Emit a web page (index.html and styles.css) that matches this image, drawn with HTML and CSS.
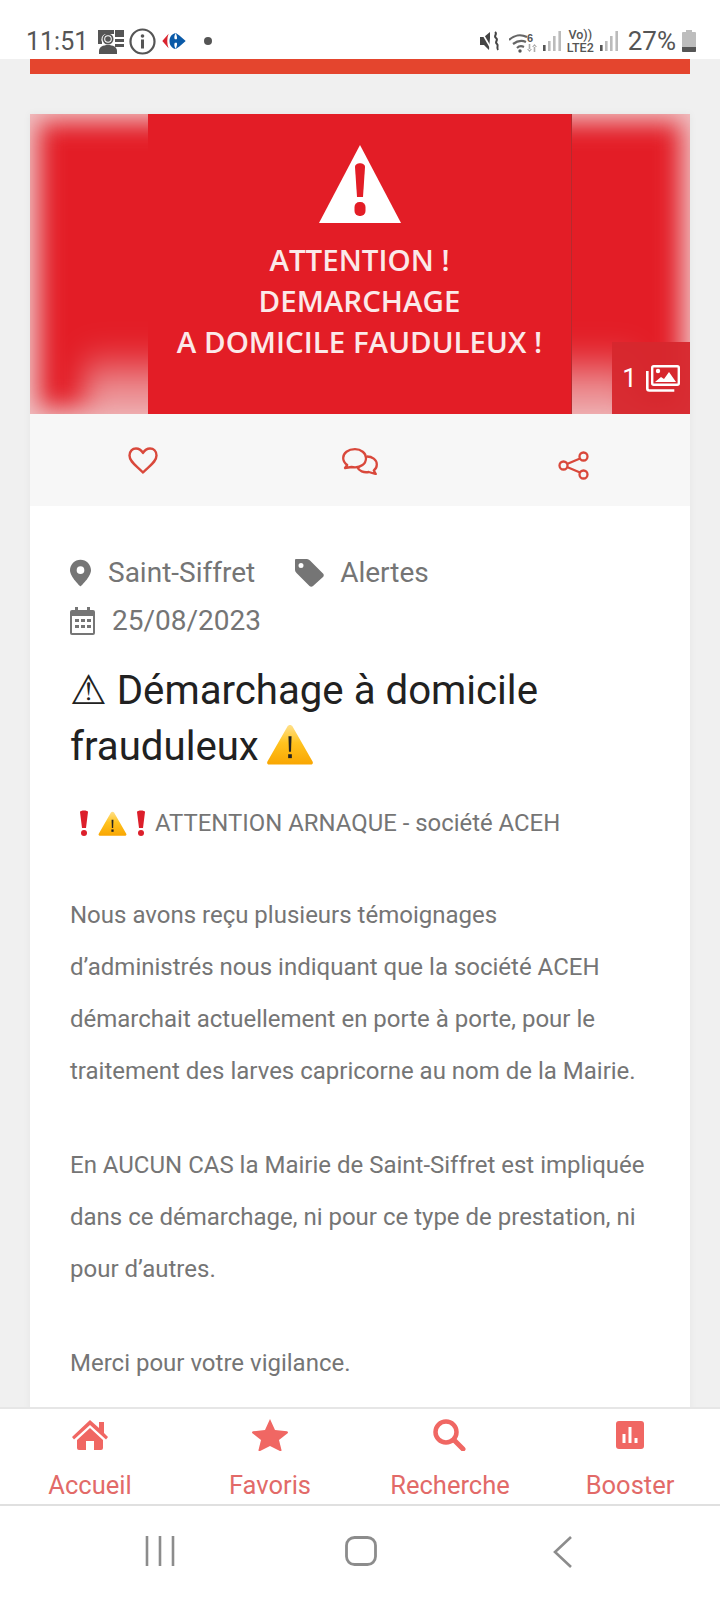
FILE: index.html
```html
<!DOCTYPE html>
<html lang="fr">
<head>
<meta charset="utf-8">
<title>Démarchage à domicile frauduleux</title>
<link rel="stylesheet" href="styles.css">
</head>
<body>
<div class="screen">
  <header class="status">
    <div class="status-left">
      <span class="time">11:51</span>
      <svg class="ic-news" viewBox="0 0 27 25"><path class="d" d="M1 1h16v4H8a6 6 0 0 0-3 8v2H1zM18 1h9v7h-9zM18 10h9v3h-9zM18 15h9v3h-9z"/><circle class="d" cx="11" cy="10" r="5.500"/><circle class="w" cx="11" cy="10" r="3.800"/><circle class="d" cx="11" cy="10" r="2.800"/><path class="d" d="M2 25v-3c0-4 4-6 9-6s9 2 9 6v3z"/></svg>
      <svg class="ic-info" viewBox="0 0 27 27"><circle cx="13.500" cy="13.500" r="12" fill="none" stroke="#555" stroke-width="2.200"/><circle class="d" cx="13.500" cy="8" r="1.800"/><rect class="d" x="12" y="11.500" width="3" height="9"/></svg>
      <svg class="ic-carrefour" viewBox="0 0 28 20"><path d="M8 2 1 10l7 8c-2-5-2-11 0-16z" fill="#d9232e"/><path d="M16 1c-5 1-7 5-7 9s2 8 7 9c-2-3-2-6-1-7h2c1 1 0 4-1 7l4-3 7-6-7-6-4-3c1 3 2 6 1 7h-2c-1-1-1-4 1-7z" fill="#0a5aa8"/></svg>
      <span class="dot"></span>
    </div>
    <div class="status-right">
      <svg class="ic-mute" viewBox="0 0 20 20"><path fill="#444" d="M0 6h4l6-5v6l-1 12-5-5H0z"/><path d="M1 0l11 19" stroke="#fff" stroke-width="1.600"/><path d="M15 1c3 2-2 4 1 6 3 2-2 4 1 6 2 2-1 3 1 6" fill="none" stroke="#444" stroke-width="2"/></svg>
      <svg class="ic-wifi" viewBox="0 -3 28 23"><g fill="none" stroke="#666" stroke-width="2.200"><path d="M0 7c5-5 12-6 18-3"/><path d="M4 11c4-3 9-4 13-2"/><path d="M8 15c2-2 5-2 7-1"/></g><circle cx="11" cy="18" r="1.700" fill="#555"/><path d="M18 16l2.500 3 2.500-3zM19.700 11h1.600v6h-1.600z" fill="#aaa"/><path d="M25.500 11l-2.500 3h5zM24.700 13h1.600v6h-1.600z" fill="#aaa"/><text class="wifi-six" x="18" y="9">6</text></svg>
      <svg class="ic-signal" viewBox="0 0 18 20"><rect x="0" y="14" width="2.600" height="6" fill="#555"/><rect x="5" y="10" width="2.600" height="10" fill="#bbb"/><rect x="10" y="5" width="2.600" height="15" fill="#bbb"/><rect x="15.400" y="0" width="2.600" height="20" fill="#bbb"/></svg>
      <span class="volte"><span>Vo))</span><span>LTE2</span></span>
      <svg class="ic-signal" viewBox="0 0 18 20"><rect x="0" y="14" width="2.600" height="6" fill="#555"/><rect x="5" y="10" width="2.600" height="10" fill="#bbb"/><rect x="10" y="5" width="2.600" height="15" fill="#bbb"/><rect x="15.400" y="0" width="2.600" height="20" fill="#bbb"/></svg>
      <span class="pct">27%</span>
      <svg class="ic-batt" viewBox="0 0 14 22"><path d="M4 0h6v2h3a1 1 0 0 1 1 1v18a1 1 0 0 1-1 1H1a1 1 0 0 1-1-1V3a1 1 0 0 1 1-1h3z" fill="#bdbdbd"/><path d="M0 17h14v4a1 1 0 0 1-1 1H1a1 1 0 0 1-1-1z" fill="#555"/></svg>
    </div>
  </header>

  <main class="page">
    <div class="topbar"></div>
    <article class="card">
      <div class="hero">
        <div class="hero-blur"></div>
        <div class="hero-panel">
          <svg class="hero-tri" viewBox="0 0 82 78"><path d="M41 0 82 78H0z" fill="#fff"/><path d="M36 22c0-5 10-5 10 0l-2 30h-6z" fill="#e31d26"/><rect x="35.500" y="57" width="11" height="14" rx="5" fill="#e31d26"/></svg>
          <p class="hero-text">ATTENTION !<br>DEMARCHAGE<br>A DOMICILE FAUDULEUX !</p>
        </div>
        <div class="badge">
          <span>1</span>
          <svg class="ic-photos" viewBox="0 0 34 27"><rect x="6.200" y="1.200" width="26.600" height="18.600" rx="1.500" fill="none" stroke="#fff" stroke-width="2.400"/><path d="M1.300 6v17.500a2 2 0 0 0 2 2h25" fill="none" stroke="#fff" stroke-width="2.600"/><circle cx="12" cy="6" r="2.200" fill="#fff"/><path d="M9 17l6-5 3 2 5-7 7 10z" fill="#fff"/></svg>
        </div>
      </div>
      <div class="actions">
        <svg class="ic-heart" viewBox="0 0 30 27"><path d="M15 25.500C9 19 1.500 15 1.500 8.500 1.500 4 4.500 1.500 8 1.500c3 0 5.500 2 7 4.500 1.500-2.500 4-4.500 7-4.500 3.500 0 6.500 2.500 6.500 7 0 6.500-7.500 10.500-13.500 17z" fill="none" stroke="#d9483b" stroke-width="2.400" stroke-linejoin="round"/></svg>
        <svg class="ic-chat" viewBox="0 0 36 27"><path d="M13 1.200C6 1.200 1.200 5 1.200 10c0 3 1.800 5.500 4 7l-2.200 3 6.500-1c5 1 9-.5 11-2 3-2 3.500-5 3.500-7 0-5-5-8.800-11-8.800z" fill="none" stroke="#d9483b" stroke-width="2.300" stroke-linejoin="round"/><path d="M25 8.500c5 0 9.800 3 9.800 8 0 2.500-1 4.500-3 6l2 3.500-7-2c-5 1-10-1-11.500-5" fill="none" stroke="#d9483b" stroke-width="2.300" stroke-linejoin="round"/></svg>
        <svg class="ic-share" viewBox="0 0 31 29"><g fill="none" stroke="#d9483b" stroke-width="2.300"><circle cx="25.500" cy="5.500" r="4"/><circle cx="25.500" cy="23.500" r="4"/><circle cx="5.500" cy="14.500" r="4"/><path d="M9 13 22 7.500M9 16 22 21.500"/></g></svg>
      </div>
      <div class="content">
        <div class="meta">
          <span class="meta-item">
            <svg class="ic-pin" viewBox="0 0 22 28"><path fill-rule="evenodd" d="M11 0C5 0 0 5 0 11c0 7 11 17 11 17s11-10 11-17C22 5 17 0 11 0zm0 7a4 4 0 1 1 0 8 4 4 0 0 1 0-8z" fill="#757575"/></svg>
            Saint-Siffret
          </span>
          <span class="meta-item meta-tag">
            <svg class="ic-tag" viewBox="0 0 29 28"><path fill-rule="evenodd" d="M1 0h11c1 0 2 .5 3 1.500l13 13c1 1 1 2.500 0 3.500L18 27c-1 1-2.500 1-3.500 0L1.500 14C.5 13 0 12 0 11V1c0-.5.500-1 1-1zm5 4a2.500 2.500 0 1 0 0 5 2.500 2.500 0 0 0 0-5z" fill="#757575"/></svg>
            Alertes
          </span>
        </div>
        <div class="meta meta-date">
          <span class="meta-item">
            <svg class="ic-cal" viewBox="0 0 25 28"><path fill-rule="evenodd" d="M5 0h3v3h9V0h3v3h3a2 2 0 0 1 2 2v21a2 2 0 0 1-2 2H2a2 2 0 0 1-2-2V5a2 2 0 0 1 2-2h3zM2 9v17h21V9z" fill="#757575"/><path d="M5 12h4v3H5zM11 12h4v3h-4zM17 12h4v3h-4zM5 18h4v3H5zM11 18h4v3h-4zM17 18h4v3h-4z" fill="#757575"/></svg>
            25/08/2023
          </span>
        </div>
        <h1 class="title"><span class="warn-text">⚠</span> Démarchage à domicile frauduleux <svg class="emoji-warn" viewBox="0 0 46 40"><defs><linearGradient id="wg" x1="0" y1="0" x2="0" y2="1"><stop offset="0" stop-color="#ffe08a"/><stop offset=".45" stop-color="#ffc31f"/><stop offset="1" stop-color="#f9a602"/></linearGradient></defs><path d="M23 1c1 0 2 .5 2.500 1.500l19.500 34c.800 1.500 0 3-1.500 3h-41c-1.500 0-2.300-1.500-1.500-3l19.500-34C21 1.500 22 1 23 1z" fill="url(#wg)"/><path d="M21.500 12h3l-.5 15h-2z" fill="#222"/><rect x="21.200" y="29.500" width="3.600" height="3.800" fill="#222"/></svg></h1>
        <p class="lead">
          <svg class="emoji-ex" viewBox="0 0 10 26"><path d="M1 2c0-2 8-2 8 0l-2 16H3z" fill="#dc1f2b"/><circle cx="5" cy="23" r="3" fill="#dc1f2b"/></svg>
          <svg class="emoji-warn-sm" viewBox="0 0 46 40"><path d="M23 1c1 0 2 .5 2.500 1.500l19.500 34c.800 1.500 0 3-1.500 3h-41c-1.500 0-2.300-1.500-1.500-3l19.500-34C21 1.500 22 1 23 1z" fill="url(#wg)"/><path d="M21.500 14h3l-.5 13h-2z" fill="#222"/><rect x="21.200" y="29.500" width="3.600" height="3.800" fill="#222"/></svg>
          <svg class="emoji-ex emoji-ex-last" viewBox="0 0 10 26"><path d="M1 2c0-2 8-2 8 0l-2 16H3z" fill="#dc1f2b"/><circle cx="5" cy="23" r="3" fill="#dc1f2b"/></svg>
          <span>ATTENTION ARNAQUE - société ACEH</span>
        </p>
        <p class="body-p">Nous avons reçu plusieurs témoignages d’administrés nous indiquant que la société ACEH démarchait actuellement en porte à porte, pour le traitement des larves capricorne au nom de la Mairie.</p>
        <p class="body-p">En AUCUN CAS la Mairie de Saint-Siffret est impliquée dans ce démarchage, ni pour ce type de prestation, ni pour d’autres.</p>
        <p class="body-p">Merci pour votre vigilance.</p>
      </div>
    </article>
  </main>

  <nav class="tabs">
    <a class="tab">
      <svg class="tab-ic" viewBox="0 0 36 30"><path d="M18 0 27 8V2h5v11l4 4-2 2.500L18 5 2 19.500 0 17z" fill="#f06763"/><path d="M18 8 5 20v8a2 2 0 0 0 2 2h7v-9h8v9h7a2 2 0 0 0 2-2v-8z" fill="#f06763"/></svg>
      <span>Accueil</span>
    </a>
    <a class="tab">
      <svg class="tab-ic" viewBox="0 0 36 32"><path d="M18 0l5 11 12 1.300c1 .2 1.300 1.400.6 2L27 21l2.500 10c.2 1-.8 1.500-1.600 1L18 27l-9.900 5c-.8.500-1.800 0-1.600-1L9 21 .4 14.300c-.7-.6-.4-1.800.6-2L13 11z" fill="#f06763"/></svg>
      <span>Favoris</span>
    </a>
    <a class="tab">
      <svg class="tab-ic" viewBox="0 0 36 32"><circle cx="14" cy="13" r="10.500" fill="none" stroke="#f06763" stroke-width="4.500"/><path d="M22 21l9 9" stroke="#f06763" stroke-width="5" stroke-linecap="round"/></svg>
      <span>Recherche</span>
    </a>
    <a class="tab">
      <svg class="tab-ic" viewBox="0 0 36 30"><rect x="4" y="1" width="28" height="28" rx="3" fill="#f06763"/><rect x="10.500" y="14" width="3" height="9" fill="#fff"/><rect x="16.500" y="7" width="3" height="16" fill="#fff"/><rect x="22.500" y="18" width="3" height="5" fill="#fff"/></svg>
      <span>Booster</span>
    </a>
  </nav>

  <footer class="sysnav">
    <svg class="sys-recent" viewBox="0 0 30 30"><path d="M2 0v30M15 0v30M28 0v30" stroke="#8c8c8c" stroke-width="2.600" fill="none"/></svg>
    <svg class="sys-home" viewBox="0 0 32 30"><rect x="1.500" y="1.500" width="29" height="27" rx="8" fill="none" stroke="#8c8c8c" stroke-width="2.800"/></svg>
    <svg class="sys-back" viewBox="0 0 20 32"><path d="M18 1 2 16l16 15" stroke="#8c8c8c" stroke-width="2.600" fill="none"/></svg>
  </footer>
</div>
</body>
</html>
```

FILE: styles.css
```css
* { box-sizing: border-box; }
html, body { margin: 0; padding: 0; }
body { font-family: Roboto, "Liberation Sans", sans-serif; background: #fff; }
svg { display: block; flex: none; }
.d { fill: #555; }
.w { fill: #fff; }

.screen { width: 720px; height: 1600px; display: flex; flex-direction: column; overflow: hidden; }

/* status bar */
.status { height: 59px; flex: none; display: flex; justify-content: space-between; align-items: center; padding: 23px 24px 0 26px; background: #fff; }
.status-left, .status-right { display: flex; align-items: center; }
.time { font-size: 25px; color: #555; margin-right: 9px; }
.ic-news { width: 27px; height: 25px; }
.ic-info { width: 27px; height: 27px; margin-left: 5px; }
.ic-carrefour { width: 26px; height: 18px; margin-left: 5px; }
.dot { width: 8px; height: 8px; border-radius: 50%; background: #555; margin-left: 17px; }
.ic-mute { width: 20px; height: 20px; margin-right: 9px; }
.ic-wifi { width: 28px; height: 23px; margin-right: 6px; }
.ic-signal { width: 18px; height: 20px; }
.wifi-six { font: 700 11px "Liberation Sans", sans-serif; fill: #555; }
.volte { display: flex; flex-direction: column; align-items: center; width: 27px; font-size: 12.500px; line-height: 13px; color: #555; margin: 0 6px 0 6px; font-weight: 500; }
.pct { font-size: 26px; color: #555; margin-left: 10px; }
.ic-batt { width: 14px; height: 22px; margin-left: 6px; }

/* page */
.page { flex: 1; min-height: 0; background: #f0f0f0; padding: 0 30px; overflow: hidden; }
.topbar { height: 15px; background: #e4452e; }
.card { margin-top: 40px; background: #fff; box-shadow: 0 0 8px rgba(0, 0, 0, .05); }

.hero { position: relative; height: 300px; overflow: hidden; background: #f0c2c4; }
.hero-blur { position: absolute; top: 8px; left: 9px; right: 9px; bottom: 6px; background: #e31d26; filter: blur(12px); }
.hero-blur::after { content: ""; position: absolute; left: 45px; right: 45px; bottom: -6px; height: 70px; background: linear-gradient(rgba(236, 160, 163, 0), #eca0a3 75%); filter: blur(8px); }
.hero-panel { position: relative; width: 423px; height: 300px; margin-left: 118px; background: #e31d26; display: flex; flex-direction: column; align-items: center; padding-top: 31px; box-shadow: 1px 0 0 #b52a2e; }
.hero-tri { width: 82px; height: 78px; }
.hero-text { margin: 16px 0 0; font-family: "Open Sans", sans-serif; font-weight: 600; font-size: 29.500px; line-height: 41px; text-align: center; color: #fbe9e9; white-space: nowrap; }
.badge { position: absolute; right: 0; bottom: 0; width: 78px; height: 72px; background: rgba(214, 40, 46, .96); display: flex; align-items: center; justify-content: center; gap: 9px; color: #fff; font-size: 26px; }
.ic-photos { width: 34px; height: 27px; }

.actions { height: 92px; background: #f7f7f7; display: grid; grid-template-columns: repeat(3, 1fr); justify-items: center; padding-top: 33px; }
.ic-heart { width: 30px; height: 27px; margin-left: 6px; }
.ic-chat { width: 36px; height: 27px; margin-top: 1px; }
.ic-share { width: 31px; height: 29px; margin-top: 4px; margin-right: 13px; }

.content { padding: 49px 45px 60px 40px; }
.meta { display: flex; align-items: center; font-size: 28px; line-height: 36px; color: #757575; }
.meta-date { margin-top: 12px; }
.meta-item { display: flex; align-items: center; }
.meta-tag { margin-left: 40px; }
.ic-pin { width: 21px; height: 28px; margin-right: 17px; }
.ic-tag { width: 29px; height: 28px; margin-right: 16px; }
.ic-cal { width: 25px; height: 28px; margin-right: 17px; }
.title { margin: 24px 0 0; font-size: 40.200px; font-weight: 400; line-height: 56px; color: #212121; }
.warn-text { font-family: "DejaVu Sans", sans-serif; font-size: 41px; line-height: 40px; }
.emoji-warn { display: inline-block; width: 48px; height: 41px; vertical-align: -5px; margin-left: -3px; }
.lead { display: flex; align-items: center; margin: 30px 0 0; padding-left: 9px; font-size: 23.900px; line-height: 36px; color: #757575; }
.emoji-ex { width: 10px; height: 26px; margin-right: 9px; }
.emoji-warn-sm { width: 29px; height: 25px; margin-right: 9px; }
.emoji-ex-last { margin-right: 9px; }
.body-p { margin: 48px 0 0; font-size: 24px; line-height: 52px; color: #757575; }
.body-p + .body-p { margin-top: 42px; }

/* tab bar */
.tabs { height: 99px; flex: none; background: #fff; border-top: 2px solid #e6e6e6; border-bottom: 2px solid #e0e0e0; display: grid; grid-template-columns: repeat(4, 180px); }
.tab { display: flex; flex-direction: column; align-items: center; padding-top: 10px; color: #e26a68; font-size: 25.500px; line-height: 30px; }
.tab-ic { width: 36px; height: 32px; margin-bottom: 19px; }

/* system nav */
.sysnav { height: 94px; flex: none; background: #fff; display: grid; grid-template-columns: 145px 28px 172px 32px 176px 18px; padding-top: 30px; align-items: start; }
.sys-recent { grid-column: 2; width: 30px; height: 30px; }
.sys-home { grid-column: 4; width: 32px; height: 30px; }
.sys-back { grid-column: 6; width: 20px; height: 32px; }
```
